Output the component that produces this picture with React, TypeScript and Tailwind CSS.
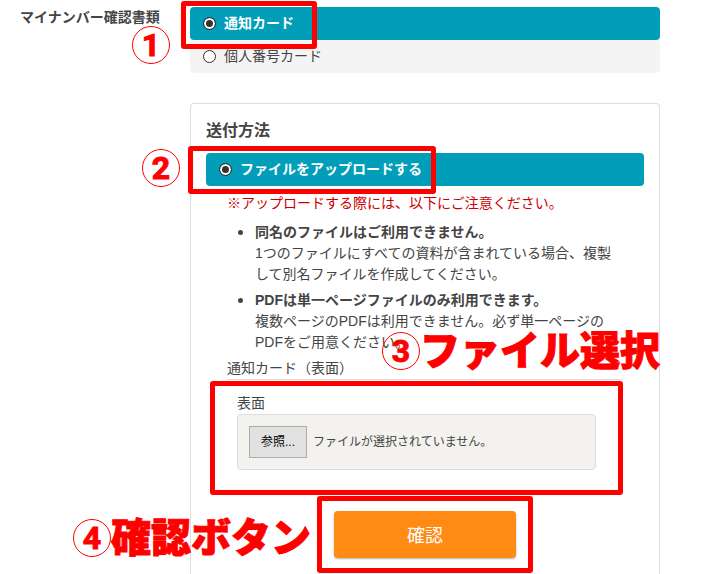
import React, { useRef, useState } from 'react';

type CalloutProps = {
  number: number;
  text?: string;
  className: string;
};

// 手順番号（丸数字＋説明）
const Callout: React.FC<CalloutProps> = ({ number, text, className }) => (
  <div className={`pointer-events-none absolute z-20 flex items-center whitespace-nowrap text-[#ff0000] ${className}`}>
    <span className="flex h-[38px] w-[38px] items-center justify-center rounded-full border border-[#ff0000] font-['Roboto',sans-serif] text-[32px] leading-none font-bold [-webkit-text-stroke:1px_#ff0000]">
      {number}
    </span>
    {text && <span className="text-[40px] leading-[38px] font-black [-webkit-text-stroke:1px_#ff0000]">{text}</span>}
  </div>
);

// 赤枠
const Frame: React.FC<{ className: string }> = ({ className }) => (
  <div className={`pointer-events-none absolute z-10 rounded-[3px] border-5 border-[#ff0000] ${className}`} />
);

type OptionProps = {
  name: string;
  value: string;
  label: string;
  checked: boolean;
  onChange: (value: string) => void;
};

const Option: React.FC<OptionProps> = ({ name, value, label, checked, onChange }) => (
  <label
    className={`flex h-[33px] cursor-pointer items-center gap-2 rounded pl-[13px] ${
      checked ? 'bg-[#009eb8] font-bold text-white' : 'bg-[#f4f4f4]'
    }`}
  >
    <input
      type="radio"
      name={name}
      value={value}
      checked={checked}
      onChange={() => onChange(value)}
      className="h-[13px] w-[13px] appearance-none rounded-full border border-[#333] bg-white checked:bg-[#333] checked:shadow-[inset_0_0_0_2px_#fff]"
    />
    <span>{label}</span>
  </label>
);

const notes = [
  {
    title: '同名のファイルはご利用できません。',
    body: '1つのファイルにすべての資料が含まれている場合、複製して別名ファイルを作成してください。',
  },
  {
    title: 'PDFは単一ページファイルのみ利用できます。',
    body: '複数ページのPDFは利用できません。必ず単一ページのPDFをご用意ください。',
  },
];

const App: React.FC = () => {
  const [document, setDocument] = useState('notice');
  const [method, setMethod] = useState('upload');
  const [fileName, setFileName] = useState('');
  const fileRef = useRef<HTMLInputElement>(null);

  return (
    <form
      onSubmit={(e) => e.preventDefault()}
      className="flex bg-white pt-[7px] pr-[59px] pl-5 font-['Liberation_Sans','Noto_Sans_CJK_JP',sans-serif] text-[14px] leading-[21px] text-[#444]"
    >
      <h2 id="document-label" className="w-[170px] shrink-0 font-bold">
        マイナンバー確認書類
      </h2>

      <div className="min-w-0 flex-1">
        {/* 確認書類 */}
        <div role="radiogroup" aria-labelledby="document-label" className="relative">
          <Option name="document" value="notice" label="通知カード" checked={document === 'notice'} onChange={setDocument} />
          <Option name="document" value="number" label="個人番号カード" checked={document === 'number'} onChange={setDocument} />
          <Frame className="-top-[6px] -left-[9px] h-12 w-[136px]" />
          <Callout number={1} className="top-[19px] -left-[58px]" />
        </div>

        {/* 送付方法 */}
        <section className="mt-[30px] rounded-t border border-b-0 border-[#ddd] px-[15px] pt-[15px] pb-4">
          <h3 className="text-[16px] leading-6 font-bold">送付方法</h3>

          <div className="relative mt-[10px]">
            <Option name="method" value="upload" label="ファイルをアップロードする" checked={method === 'upload'} onChange={setMethod} />
            <Frame className="-top-[7px] -left-[18px] h-12 w-[248px]" />
            <Callout number={2} className="-top-1 -left-16" />
          </div>

          <div className="px-[21px]">
            <p className="mt-[7px] text-[#cc0000]">※アップロードする際には、以下にご注意ください。</p>

            <ul className="mt-[7px] list-disc space-y-1 pl-7 marker:text-[18px]">
              {notes.map((note) => (
                <li key={note.title}>
                  <strong className="block">{note.title}</strong>
                  {note.body}
                </li>
              ))}
            </ul>

            <p className="mt-[5px] border-b border-[#ddd]">通知カード（表面）</p>

            <div className="relative pt-[13px] pr-[27px] pl-[10px]">
              <label htmlFor="front-file">表面</label>
              <div className="flex h-14 items-center gap-[6px] rounded border border-[#ddd] bg-[#f3f2ee] px-[11px] text-[12px]">
                <input
                  ref={fileRef}
                  id="front-file"
                  type="file"
                  className="hidden"
                  onChange={(e) => setFileName(e.target.files?.[0]?.name ?? '')}
                />
                <button
                  type="button"
                  onClick={() => fileRef.current?.click()}
                  className="h-8 w-[58px] border border-[#adadad] bg-[#e1e1e1] text-black"
                >
                  参照...
                </button>
                <span>{fileName || 'ファイルが選択されていません。'}</span>
              </div>
              <Frame className="top-[1px] right-0 -bottom-[25px] -left-[17px]" />
              <Callout number={3} text="ファイル選択" className="-top-12 left-[155px]" />
            </div>
          </div>

          <div className="relative mx-auto mt-[41px] w-[182px]">
            <button
              type="submit"
              className="h-[47px] w-full rounded bg-[#ff8a14] font-['Noto_Sans_CJK_JP',sans-serif] text-[18px] text-white shadow-[0_1px_2px_rgba(0,0,0,0.3)]"
            >
              確認
            </button>
            <Frame className="-inset-x-[17px] -inset-y-[15px]" />
            <Callout number={4} text="確認ボタン" className="top-2 -left-[261px]" />
          </div>
        </section>
      </div>
    </form>
  );
};

export default App;
